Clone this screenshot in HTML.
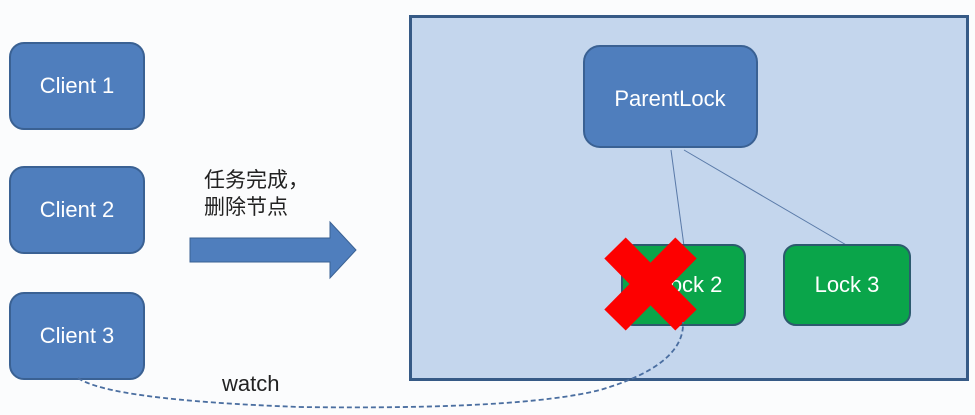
<!DOCTYPE html>
<html><head><meta charset="utf-8"><style>
body{margin:0;width:975px;height:415px;background:#fbfcfd;overflow:hidden}
</style></head><body>
<svg width="975" height="415" xmlns="http://www.w3.org/2000/svg" style="position:absolute;left:0;top:0">
<rect x="410.5" y="16.5" width="557" height="363" fill="#c4d6ed" stroke="#365a86" stroke-width="3"/>
<g font-family="Liberation Sans, DejaVu Sans, sans-serif" fill="#fff" font-size="22" text-anchor="middle">
<rect x="10" y="43" width="134" height="86" rx="14" fill="#4f7ebd" stroke="#3a6193" stroke-width="2"/>
<text x="77" y="93">Client 1</text>
<rect x="10" y="167" width="134" height="86" rx="14" fill="#4f7ebd" stroke="#3a6193" stroke-width="2"/>
<text x="77" y="217">Client 2</text>
<rect x="10" y="293" width="134" height="86" rx="14" fill="#4f7ebd" stroke="#3a6193" stroke-width="2"/>
<text x="77" y="343">Client 3</text>
<line x1="671" y1="150" x2="684" y2="246" stroke="#5a7aa8" stroke-width="1"/>
<line x1="684" y1="150" x2="848" y2="246" stroke="#5a7aa8" stroke-width="1"/>
<rect x="584" y="46" width="173" height="101" rx="16" fill="#4f7ebd" stroke="#3a6193" stroke-width="2"/>
<text x="670" y="106">ParentLock</text>
<rect x="622" y="245" width="123" height="80" rx="12" fill="#0aa54a" stroke="#2d5a6e" stroke-width="2"/>
<text x="690" y="292">Lock 2</text>
<rect x="784" y="245" width="126" height="80" rx="12" fill="#0aa54a" stroke="#2d5a6e" stroke-width="2"/>
<text x="847" y="292">Lock 3</text>
</g>
<g stroke="#fd0000" stroke-width="30">
<line x1="615" y1="248" x2="686" y2="320"/>
<line x1="686" y1="248" x2="615" y2="320"/>
</g>
<path d="M190,238 H330 V222 L356,250 L330,278 V262 H190 Z" fill="#4f7ebd" stroke="#3a6193" stroke-width="1"/>
<g font-family="Liberation Sans, Noto Sans CJK SC, sans-serif" font-size="21" fill="#222">
<text x="204" y="187">任务完成，</text>
<text x="204" y="214">删除节点</text>
<text x="222" y="391" font-size="22">watch</text>
</g>
<path d="M78,378 Q110,400 300,407 Q520,410 600,390 Q685,365 683,322" fill="none" stroke="#4a6ea0" stroke-width="1.8" stroke-dasharray="5,3"/>
</svg>
</body></html>
